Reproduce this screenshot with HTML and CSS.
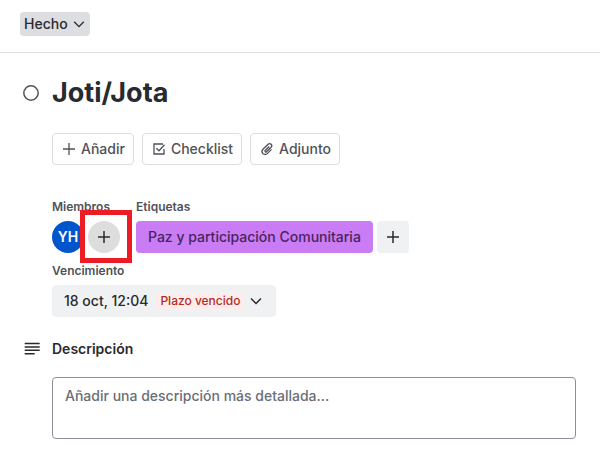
FILE: index.html
```html
<!DOCTYPE html>
<html lang="es">
<head>
<meta charset="utf-8">
<meta name="viewport" content="width=device-width, initial-scale=1">
<title>Joti/Jota</title>
<link rel="stylesheet" href="styles.css">
</head>
<body>
<header class="card-header">
  <div class="list-picker">
    <select class="list-select" aria-label="Lista"><option>Hecho</option></select>
    <svg class="icon list-chevron" viewBox="0 0 16 16" aria-hidden="true"><path d="M2.500 5.500 8 11 13.500 5.500"/></svg>
  </div>
</header>
<main class="card">
  <div class="row title-row">
    <button class="complete" type="button" aria-label="Marcar como completada">
      <svg class="icon" viewBox="0 0 16 16" aria-hidden="true"><circle cx="8" cy="8" r="7.2"/></svg>
    </button>
    <h1 class="title">Joti/Jota</h1>
  </div>

  <div class="actions">
    <button class="action" type="button">
      <svg class="icon" viewBox="0 0 16 16" aria-hidden="true"><path d="M8 2v12M2 8h12"/></svg>Añadir
    </button>
    <button class="action" type="button">
      <svg class="icon" viewBox="0 0 16 16" aria-hidden="true"><path d="M12 3H3v10h10V8M5.300 7.200 8 9.800 13.500 3.800"/></svg>Checklist
    </button>
    <button class="action" type="button">
      <svg class="icon" viewBox="0 0 16 16" aria-hidden="true"><path d="M10.200 5.500 6.200 9.500a.9.900 0 0 0 1.300 1.300l4.600-4.600a2.100 2.100 0 0 0-3-3L4 8.300a3 3 0 0 0 4.300 4.300l4.200-4.200"/></svg>Adjunto
    </button>
  </div>

  <div class="details">
    <section class="detail">
      <h2 class="label">Miembros</h2>
      <div class="items">
        <span class="avatar">YH</span>
        <div class="highlight">
          <button class="add add-member" type="button" aria-label="Añadir miembro">
            <svg class="icon" viewBox="0 0 16 16" aria-hidden="true"><path d="M8 2v12M2 8h12"/></svg>
          </button>
        </div>
      </div>
    </section>
    <section class="detail">
      <h2 class="label">Etiquetas</h2>
      <div class="items">
        <button class="tag" type="button">Paz y participación Comunitaria</button>
        <button class="add" type="button" aria-label="Añadir etiqueta">
          <svg class="icon" viewBox="0 0 16 16" aria-hidden="true"><path d="M8 2v12M2 8h12"/></svg>
        </button>
      </div>
    </section>
    <section class="detail">
      <h2 class="label">Vencimiento</h2>
      <button class="due" type="button">18 oct, 12:04
        <span class="overdue">Plazo vencido</span>
        <svg class="icon" viewBox="0 0 16 16" aria-hidden="true"><path d="M3 5.500 8 10.500 13 5.500"/></svg>
      </button>
    </section>
  </div>

  <div class="row description-row">
    <svg class="icon lines" viewBox="0 0 16 16" aria-hidden="true"><path d="M.7 2.600h15M.7 6h15M.7 9.300h15M.7 12.700h10"/></svg>
    <label class="heading" for="description">Descripción</label>
  </div>
  <textarea class="description" id="description" placeholder="Añadir una descripción más detallada…"></textarea>
</main>
</body>
</html>
```
FILE: styles.css
```css
* {
  box-sizing: border-box;
}

body {
  margin: 0;
  background: #fff;
  color: #292a2e;
  font: 500 14px/20px Inter, sans-serif;
}

button,
select,
textarea {
  margin: 0;
  border: 0;
  font: inherit;
  color: inherit;
}

h1,
h2 {
  margin: 0;
}

.icon {
  width: 16px;
  height: 16px;
  flex: none;
  fill: none;
  stroke: currentColor;
  stroke-width: 1.5;
}

.card-header {
  display: flex;
  padding: 12px 20px 16px;
  border-bottom: 1px solid #dddee1;
}

.list-picker {
  display: grid;
  align-items: center;
}

.list-select {
  grid-area: 1 / 1;
  appearance: none;
  height: 24px;
  padding: 0 22px 0 4px;
  border-radius: 4px;
  background: #dddee1;
}

.list-chevron {
  grid-area: 1 / 1;
  justify-self: end;
  width: 14px;
  height: 14px;
  margin-right: 4px;
  pointer-events: none;
}

.card {
  padding: 24px 24px 16px 52px;
}

.row {
  display: flex;
  align-items: center;
  margin-left: -28px;
}

.complete {
  display: flex;
  width: 28px;
  padding: 0;
  background: none;
  color: #505258;
}

.complete .icon {
  margin-left: -1px;
}

.title {
  font-size: 27px;
  line-height: 32px;
  font-weight: 700;
}

.actions {
  display: flex;
  flex-wrap: wrap;
  gap: 8px;
  margin-top: 24px;
}

.action {
  display: flex;
  align-items: center;
  gap: 4px;
  height: 32px;
  padding: 0 8px;
  border: 1px solid #dddee1;
  border-radius: 4px;
  background: #fff;
  color: #505258;
}

.action .icon {
  stroke-width: 1.3;
}

.details {
  display: flex;
  flex-wrap: wrap;
  gap: 10px 16px;
  margin-top: 34px;
}

.label {
  margin-bottom: 6px;
  color: #505258;
  font-size: 12px;
  line-height: 16px;
  font-weight: 600;
}

.items {
  display: flex;
  gap: 4px;
}

.avatar {
  width: 32px;
  border-radius: 50%;
  background: #0055cc;
  color: #fff;
  line-height: 32px;
  font-weight: 600;
  text-align: center;
}

.highlight {
  position: relative;
}

.highlight::after {
  content: "";
  position: absolute;
  inset: -11px -12px -10px -8px;
  border: 5px solid #ed1c24;
  pointer-events: none;
}

.add {
  display: flex;
  align-items: center;
  justify-content: center;
  width: 32px;
  height: 32px;
  padding: 0;
  border-radius: 4px;
  background: #f0f1f2;
}

.add-member {
  border-radius: 50%;
  background: #dddddd;
}

.tag {
  height: 32px;
  padding: 0 12px;
  border-radius: 4px;
  background: #c97cf4;
  color: #48245d;
}

.due {
  display: flex;
  align-items: center;
  gap: 8px;
  height: 32px;
  padding: 0 12px;
  padding-right: 12px;
  border-radius: 4px;
  background: #f0f1f2;
}

.due .icon {
  margin-left: -4px;
}

.overdue {
  padding: 0 4px;
  border-radius: 2px;
  background: #ffeceb;
  color: #ae2e24;
  font-size: 12px;
  line-height: 16px;
}

.description-row {
  margin-top: 22px;
}

.lines {
  margin-right: 12px;
}

.heading {
  font-weight: 600;
}

.description {
  display: block;
  width: 100%;
  height: 62px;
  margin-top: 18px;
  padding: 8px 12px;
  border: 1px solid #8c8f97;
  border-radius: 4px;
  background: #fff;
  resize: none;
}

.description::placeholder {
  color: #6b6e76;
  opacity: 1;
}
```
